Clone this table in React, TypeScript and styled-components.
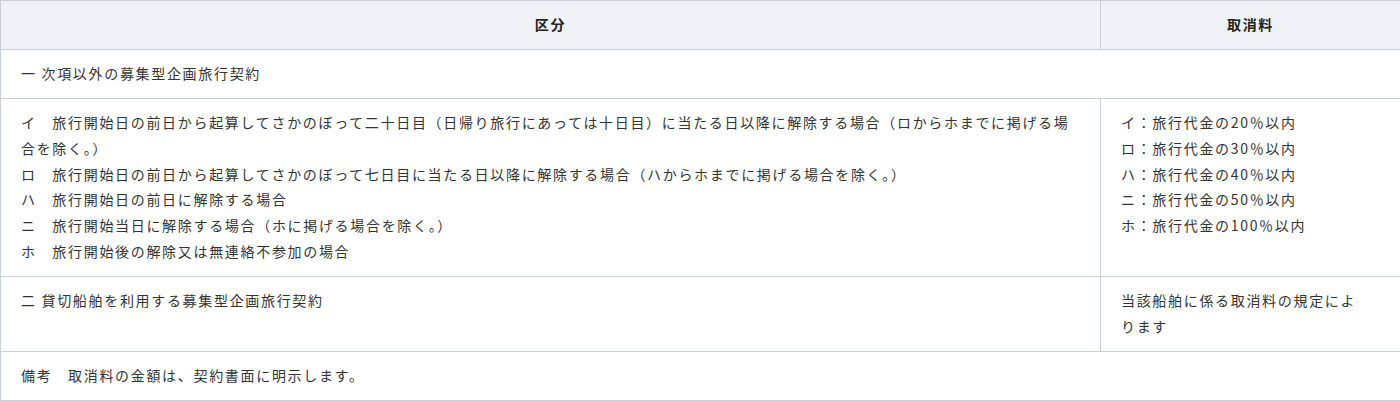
import styled, { createGlobalStyle } from "styled-components"

const GlobalStyle = createGlobalStyle`
  body {
    margin: 0;
    background: #fff;
    color: #333;
    font-family: "Noto Sans CJK JP", "Noto Sans", sans-serif;
  }
`

const Table = styled.table`
  width: 1400px;
  border-collapse: collapse;
  table-layout: fixed;
  font-size: 14px;
  line-height: 25.8px;
  letter-spacing: 0.12em;
`

const HeadCell = styled.th`
  background: #eff2f6;
  border: 1px solid #cacfd7;
  padding: 11.1px 20px;
  font-weight: bold;
  text-align: center;
  color: #222;
`

const Cell = styled.td<{ $wide?: boolean }>`
  border: 1px solid #cacfd7;
  padding: 11.1px ${(p) => (p.$wide ? "20px" : "40px")} 11.1px 20px;
  vertical-align: top;
  text-align: left;
`

const Line = styled.div`
  white-space: normal;
`

const rowI = [
  "イ　旅行開始日の前日から起算してさかのぼって二十日目（日帰り旅行にあっては十日目）に当たる日以降に解除する場合（ロからホまでに掲げる場合を除く。）",
  "ロ　旅行開始日の前日から起算してさかのぼって七日目に当たる日以降に解除する場合（ハからホまでに掲げる場合を除く。）",
  "ハ　旅行開始日の前日に解除する場合",
  "ニ　旅行開始当日に解除する場合（ホに掲げる場合を除く。）",
  "ホ　旅行開始後の解除又は無連絡不参加の場合",
]

const fees = [
  "イ：旅行代金の20％以内",
  "ロ：旅行代金の30％以内",
  "ハ：旅行代金の40％以内",
  "ニ：旅行代金の50％以内",
  "ホ：旅行代金の100％以内",
]

export default function App() {
  return (
    <>
      <GlobalStyle />
      <Table>
        <colgroup>
          <col style={{ width: 1100 }} />
          <col style={{ width: 300 }} />
        </colgroup>
        <thead>
          <tr>
            <HeadCell>区分</HeadCell>
            <HeadCell>取消料</HeadCell>
          </tr>
        </thead>
        <tbody>
          <tr>
            <Cell colSpan={2} $wide>一 次項以外の募集型企画旅行契約</Cell>
          </tr>
          <tr>
            <Cell $wide>
              {rowI.map((t) => (
                <Line key={t}>{t}</Line>
              ))}
            </Cell>
            <Cell>
              {fees.map((t) => (
                <Line key={t}>{t}</Line>
              ))}
            </Cell>
          </tr>
          <tr>
            <Cell $wide>二 貸切船舶を利用する募集型企画旅行契約</Cell>
            <Cell>当該船舶に係る取消料の規定によります</Cell>
          </tr>
          <tr>
            <Cell colSpan={2} $wide>備考　取消料の金額は、契約書面に明示します。</Cell>
          </tr>
        </tbody>
      </Table>
    </>
  )
}
